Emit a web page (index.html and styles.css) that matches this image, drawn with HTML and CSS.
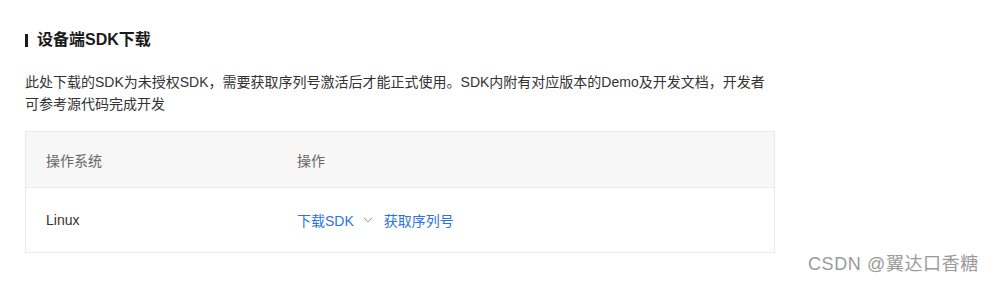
FILE: index.html
```html
<!DOCTYPE html>
<html lang="zh-CN">
  <head>
    <meta charset="UTF-8" />
    <meta name="viewport" content="width=device-width, initial-scale=1.0" />
    <title>设备端SDK下载</title>
    <link rel="stylesheet" href="styles.css">
  </head>
  <body>
    <div class="page">
      <h2 class="title">设备端SDK下载</h2>

      <p class="desc">
        此处下载的SDK为未授权SDK，需要获取序列号激活后才能正式使用。SDK内附有对应版本的Demo及开发文档，开发者可参考源代码完成开发
      </p>

      <div class="table">
        <div class="row head">
          <div class="cell">操作系统</div>
          <div class="cell">操作</div>
        </div>
        <div class="row">
          <div class="cell">Linux</div>
          <div class="cell actions">
            <a class="link" href="#">下载SDK</a>
            <svg class="chevron" width="10" height="6" viewBox="0 0 10 6">
              <path d="M1 0.8 L5 4.8 L9 0.8" fill="none" stroke="#a8a8a8" stroke-width="1.1" />
            </svg>
            <a class="link" href="#">获取序列号</a>
          </div>
        </div>
      </div>
    </div>

    <div class="watermark">CSDN @翼达口香糖</div>
  </body>
</html>
```

FILE: styles.css
```css
/* General styling */
body {
  font-family: "Liberation Sans", "Noto Sans CJK SC", sans-serif;
  background-color: #fff;
  color: #333;
  margin: 0;
}

.page {
  width: 750px;
  padding: 28px 0 0 25px;
}

/* Title */
.title {
  display: flex;
  align-items: center;
  margin: 0;
  font-size: 16px;
  line-height: 24px;
  font-weight: 600;
  color: #1a1a1a;
}

.title::before {
  content: "";
  width: 3px;
  height: 13px;
  background-color: #1a1a1a;
  margin-right: 9px;
}

.desc {
  margin: 19px 0 16px;
  font-size: 14px;
  line-height: 22px;
  color: #333;
}

/* Table styling */
.table {
  border: 1px solid #e9e9e9;
  font-size: 14px;
}

.row {
  display: grid;
  grid-template-columns: 251px 1fr;
  align-items: center;
  height: 64px;
}

.row.head {
  height: 55px;
  background-color: #f7f7f7;
  border-bottom: 1px solid #e9e9e9;
  color: #666;
}

.cell {
  padding-left: 20px;
}

.actions {
  display: flex;
  align-items: center;
}

.link {
  color: #2b72e6;
  text-decoration: none;
}

.chevron {
  margin: 0 11px 0 9px;
}

/* Watermark */
.watermark {
  position: absolute;
  left: 808px;
  top: 252px;
  font-size: 18px;
  line-height: 24px;
  color: #9a9a9a;
  letter-spacing: 0.6px;
}
```
